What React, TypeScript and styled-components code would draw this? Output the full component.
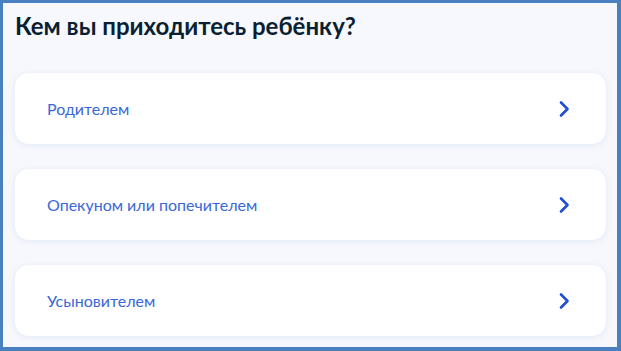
import React from 'react';
import styled, { createGlobalStyle } from 'styled-components';

const GlobalStyle = createGlobalStyle`
  html, body {
    margin: 0;
    padding: 0;
    background: #4a7fc0;
  }
  * {
    box-sizing: border-box;
  }
`;

const Frame = styled.div`
  width: 621px;
  height: 351px;
  border-style: solid;
  border-color: #4a7fc0;
  border-width: 3px 4px 4px 3px;
  background: #f6f8fd;
  font-family: Lato, "Noto Sans", sans-serif;
  overflow: hidden;
`;

const Content = styled.div`
  padding: 8px 11px 0 12px;
  display: flex;
  flex-direction: column;
`;

const Title = styled.h1`
  margin: 0 0 33px 0;
  font-size: 24px;
  line-height: 29px;
  font-weight: 700;
  color: #0b1f33;
`;

const List = styled.div`
  display: flex;
  flex-direction: column;
  gap: 25px;
`;

const Option = styled.button`
  display: flex;
  align-items: center;
  justify-content: space-between;
  width: 591px;
  height: 71px;
  padding: 0 36px 0 32px;
  border: none;
  border-radius: 14px;
  background: #ffffff;
  box-shadow: 0 1px 6px rgba(86, 118, 182, 0.12);
  font-family: inherit;
  font-size: 16px;
  color: #3a68d8;
  cursor: pointer;
  text-align: left;
`;

const Chevron = () => (
  <svg width="12" height="18" viewBox="0 0 12 18" fill="none">
    <path
      d="M3 2.5 L9.5 9 L3 15.5"
      stroke="#1d4fcf"
      strokeWidth="2.6"
      strokeLinecap="round"
      strokeLinejoin="round"
    />
  </svg>
);

const options = ['Родителем', 'Опекуном или попечителем', 'Усыновителем'];

export default function App() {
  return (
    <>
      <GlobalStyle />
      <Frame>
        <Content>
          <Title>Кем вы приходитесь ребёнку?</Title>
          <List>
            {options.map((label) => (
              <Option key={label}>
                <span>{label}</span>
                <Chevron />
              </Option>
            ))}
          </List>
        </Content>
      </Frame>
    </>
  );
}
